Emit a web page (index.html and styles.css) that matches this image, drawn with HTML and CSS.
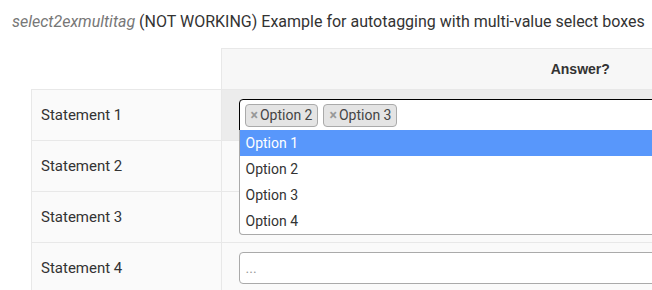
FILE: index.html
```html
<!DOCTYPE html>
<html lang="en">
<head>
    <meta charset="UTF-8">
    <title>select2exmultitag</title>
    <link rel="stylesheet" href="styles.css">
</head>
<body>

    <!-- Example heading -->
    <p class="example-title"><span class="example-name">select2exmultitag</span> (NOT WORKING) Example for autotagging with multi-value select boxes</p>

    <table class="question-table">
        <thead>
            <tr>
                <th class="blank"></th>
                <th class="answer-head">Answer?</th>
            </tr>
        </thead>
        <tbody>
            <tr class="active">
                <td class="statement">Statement 1</td>
                <td class="answer">
                    <div class="select2 open">
                        <ul class="selection">
                            <li class="choice"><span class="remove">×</span>Option 2</li>
                            <li class="choice"><span class="remove">×</span>Option 3</li>
                        </ul>
                        <ul class="dropdown">
                            <li class="option highlighted">Option 1</li>
                            <li class="option">Option 2</li>
                            <li class="option">Option 3</li>
                            <li class="option">Option 4</li>
                        </ul>
                    </div>
                </td>
            </tr>
            <!-- rows 2 and 3 sit under the open dropdown -->
            <tr>
                <td class="statement">Statement 2</td>
                <td class="answer"><div class="select2"><ul class="selection"></ul></div></td>
            </tr>
            <tr>
                <td class="statement">Statement 3</td>
                <td class="answer"><div class="select2"><ul class="selection"></ul></div></td>
            </tr>
            <tr>
                <td class="statement">Statement 4</td>
                <td class="answer"><div class="select2"><ul class="selection"><li class="placeholder">...</li></ul></div></td>
            </tr>
        </tbody>
    </table>

</body>
</html>
```

FILE: styles.css
```css
html, body {
    overflow: hidden;
}
body {
    margin: 0;
    padding: 0 0 0 12px;
    background-color: white;
    font-family: Roboto, sans-serif;
    color: #333;
}
.example-title {
    margin: 12px 0 17px 0;
    font-size: 16px;
    line-height: 19px;
    white-space: nowrap;
}
.example-name {
    font-style: italic;
    color: #777;
}
.question-table {
    margin-left: 19px;
    border-collapse: collapse;
    width: 909px;
    table-layout: fixed;
}
.question-table th,
.question-table td {
    border: 1px solid #e8e8e8;
}
.question-table th.blank {
    width: 189px;
    padding: 0;
    border: none;
    border-right: 1px solid #e8e8e8;
}
.answer-head {
    height: 40px;
    padding: 0;
    background-color: #f7f7f7;
    font-family: "Liberation Sans", Arial, sans-serif;
    font-size: 14px;
    font-weight: bold;
    text-align: center;
}
.statement {
    height: 50px;
    box-sizing: border-box;
    padding: 0 9px;
    background-color: #fafafa;
    font-size: 15px;
}
.answer {
    padding: 9px 19px 9px 17px;
    background-color: #fafafa;
    vertical-align: top;
}
tr.active .answer {
    background-color: #ececec;
}
.select2 {
    position: relative;
}
.selection {
    list-style: none;
    box-sizing: border-box;
    margin: 0;
    padding: 0 5px 0 0;
    height: 32px;
    background-color: white;
    border: 1px solid #aaa;
    border-radius: 4px;
    display: flex;
    align-items: flex-start;
}
.select2.open .selection {
    border-color: black;
    border-radius: 4px 4px 0 0;
}
.choice {
    margin: 4px 0 0 5px;
    padding: 0 5px;
    height: 21px;
    line-height: 21px;
    font-size: 14px;
    color: #444;
    background-color: #e4e4e4;
    border: 1px solid #aaa;
    border-radius: 4px;
}
.remove {
    color: #999;
    font-weight: bold;
    margin-right: 2px;
}
.placeholder {
    margin: 4px 0 0 6px;
    line-height: 22px;
    font-size: 14px;
    color: #999;
}
.dropdown {
    position: absolute;
    left: 0;
    right: 0;
    top: 31px;
    margin: 0;
    padding: 0;
    list-style: none;
    background-color: white;
    border: 1px solid #aaa;
    border-top: none;
    border-radius: 0 0 4px 4px;
    z-index: 2;
}
.option {
    height: 26px;
    line-height: 26px;
    padding: 0 6px;
    font-size: 14px;
    color: #333;
}
.option.highlighted {
    background-color: #5897fb;
    color: white;
}
```
